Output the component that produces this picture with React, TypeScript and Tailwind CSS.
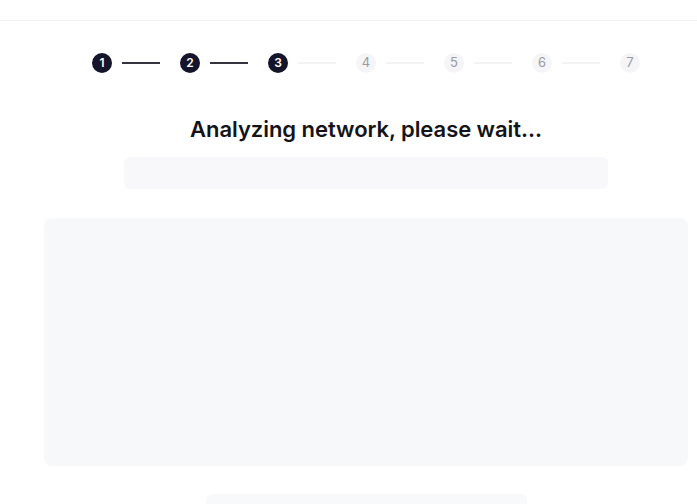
import React from 'react';

const steps = [1, 2, 3, 4, 5, 6, 7];
const current = 3;

const StepDot: React.FC<{ n: number; done: boolean }> = ({ n, done }) => (
    <div
        className={
            done
                ? 'w-5 h-5 rounded-full bg-[#14142b] text-white text-[12px] font-semibold flex items-center justify-center shrink-0'
                : 'w-5 h-5 rounded-full bg-[#f5f5f7] text-[#9a9aa3] text-[13px] font-normal flex items-center justify-center shrink-0'
        }
    >
        {n}
    </div>
);

export default function App() {
    return (
        <div className="w-[697px] h-[504px] overflow-hidden bg-white font-['Inter','Noto_Sans',sans-serif]">
            <div className="h-[21px] border-b border-[#f2f2f4]" />

            <div className="ml-[44px] w-[644px] flex flex-col items-center">
                {/* stepper */}
                <div className="mt-[32px] flex items-center">
                    {steps.map((n, i) => (
                        <div key={n} className="flex items-center">
                            <StepDot n={n} done={n <= current} />
                            {i < steps.length - 1 && (
                                <div
                                    className={
                                        n < current
                                            ? 'ml-[10px] mr-[20px] w-[38px] h-[2px] bg-[#33333f]'
                                            : 'ml-[10px] mr-[20px] w-[38px] h-[2px] bg-[#f3f3f5]'
                                    }
                                />
                            )}
                        </div>
                    ))}
                </div>

                <h1 className="mt-[42px] text-[22px] leading-[28px] font-semibold text-[#141418] tracking-[-0.05px]">
                    Analyzing network, please wait...
                </h1>

                {/* skeleton line */}
                <div className="mt-[14px] w-[484px] h-[32px] rounded-md bg-[#f8f8fa]" />

                {/* main panel placeholder */}
                <div className="mt-[29px] w-[644px] h-[248px] rounded-lg bg-[#f7f8fa]" />

                {/* footer placeholder */}
                <div className="mt-[28px] w-[321px] h-[20px] rounded-md bg-[#f8f9fb]" />
            </div>
        </div>
    );
}
